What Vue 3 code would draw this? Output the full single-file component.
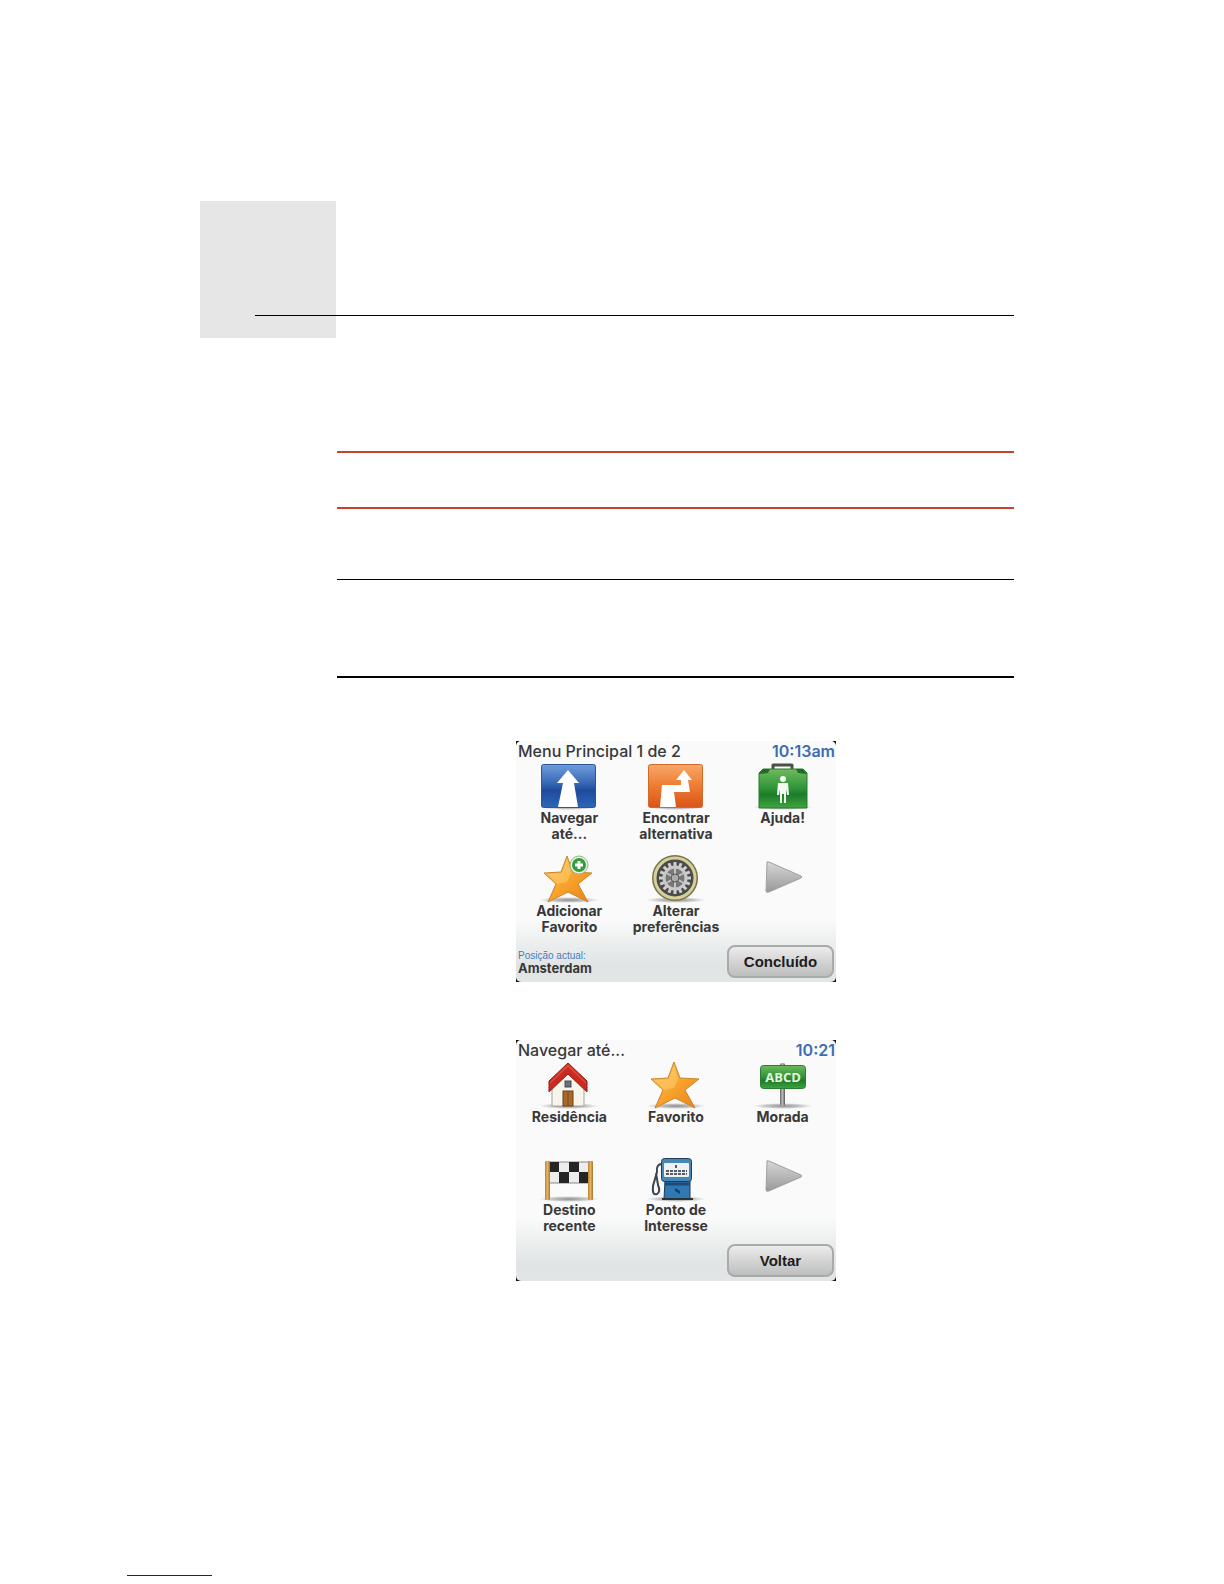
<script setup>
const screens = [
  {
    title: 'Menu Principal 1 de 2',
    time: '10:13am',
    button: 'Concluído',
    position: { label: 'Posição actual:', place: 'Amsterdam' },
    items: [
      { icon: 'navigate', lines: ['Navegar', 'até...'] },
      { icon: 'detour', lines: ['Encontrar', 'alternativa'] },
      { icon: 'help', lines: ['Ajuda!'] },
      { icon: 'addstar', lines: ['Adicionar', 'Favorito'] },
      { icon: 'gear', lines: ['Alterar', 'preferências'] },
      { icon: 'next', lines: [] },
    ],
  },
  {
    title: 'Navegar até...',
    time: '10:21',
    button: 'Voltar',
    position: null,
    items: [
      { icon: 'home', lines: ['Residência'] },
      { icon: 'star', lines: ['Favorito'] },
      { icon: 'sign', lines: ['Morada'] },
      { icon: 'flag', lines: ['Destino', 'recente'] },
      { icon: 'pump', lines: ['Ponto de', 'Interesse'] },
      { icon: 'next', lines: [] },
    ],
  },
]
const teeth = Array.from({ length: 16 }, (_, i) => i * 22.5)
const spokes = [0, 60, 120, 180, 240, 300]
</script>

<template>
  <main class="page">
    <svg class="defs" aria-hidden="true">
      <defs>
        <linearGradient id="blue" x1="0" y1="0" x2="0" y2="1">
          <stop offset="0" stop-color="#6f9ddd" /><stop offset=".45" stop-color="#3566b4" /><stop offset=".6" stop-color="#1f4b9b" /><stop offset="1" stop-color="#2d66b8" />
        </linearGradient>
        <linearGradient id="orange" x1="0" y1="0" x2="0" y2="1">
          <stop offset="0" stop-color="#f8a768" /><stop offset=".5" stop-color="#ee7c32" /><stop offset="1" stop-color="#d9541a" />
        </linearGradient>
        <linearGradient id="green" x1="0" y1="0" x2="0" y2="1">
          <stop offset="0" stop-color="#6dbb5c" /><stop offset=".5" stop-color="#2f9338" /><stop offset=".65" stop-color="#1c7c2a" /><stop offset="1" stop-color="#3fa43f" />
        </linearGradient>
        <linearGradient id="gold" x1="0" y1="0" x2="1" y2="1">
          <stop offset="0" stop-color="#ffc95c" /><stop offset=".5" stop-color="#f9a42c" /><stop offset="1" stop-color="#e8821a" />
        </linearGradient>
        <linearGradient id="silver" x1="0" y1="0" x2="0" y2="1">
          <stop offset="0" stop-color="#d8d8d8" /><stop offset="1" stop-color="#989898" />
        </linearGradient>
        <linearGradient id="wood" x1="0" y1="0" x2="1" y2="0">
          <stop offset="0" stop-color="#b98236" /><stop offset=".5" stop-color="#e3b463" /><stop offset="1" stop-color="#a8732c" />
        </linearGradient>
        <linearGradient id="metal" x1="0" y1="0" x2="1" y2="0">
          <stop offset="0" stop-color="#666" /><stop offset=".5" stop-color="#bbb" /><stop offset="1" stop-color="#555" />
        </linearGradient>
        <radialGradient id="shadow">
          <stop offset="0" stop-color="#444" stop-opacity=".6" /><stop offset=".6" stop-color="#666" stop-opacity=".35" /><stop offset="1" stop-color="#888" stop-opacity="0" />
        </radialGradient>
      </defs>
    </svg>

    <header class="masthead">
      <div class="swatch"></div>
      <hr class="headline">
    </header>

    <div class="content">
      <hr class="rule red first">
      <hr class="rule red second">
      <hr class="rule thin">
      <hr class="rule thick">

      <section v-for="s in screens" :key="s.title" class="screen">
        <div class="face">
          <div class="bar">
            <h2>{{ s.title }}</h2>
            <time>{{ s.time }}</time>
          </div>
          <div class="grid">
            <button v-for="item in s.items" :key="item.icon" type="button" class="item" :aria-label="item.lines.length ? null : 'Seguinte'">
              <svg class="icon" viewBox="0 0 64 48" aria-hidden="true">
                <ellipse v-if="item.icon !== 'next'" cx="32" cy="45" rx="30" ry="3" fill="url(#shadow)" />
                <g v-if="item.icon === 'navigate'">
                  <rect x="4.5" y="2.5" width="54" height="43" rx="2" fill="url(#blue)" stroke="#2b5499" />
                  <path d="M31 8 42 21H37L41 45H21L26 21H20Z" fill="#fff" />
                </g>
                <g v-else-if="item.icon === 'detour'">
                  <rect x="4.5" y="2.5" width="54" height="43" rx="2" fill="url(#orange)" stroke="#d2692c" />
                  <path d="M16 45 18 23H37V18H32L40 8 48 18H44L46 30H30L32 45Z" fill="#fff" />
                </g>
                <g v-else-if="item.icon === 'help'">
                  <path d="M22 9V3H41V9" fill="none" stroke="#4a504a" stroke-width="3" stroke-linejoin="round" />
                  <path d="M12 7H52L56 11V46H8V11Z" fill="url(#green)" stroke="#2a7a30" stroke-linejoin="round" />
                  <path d="M8 12 12 7H19L17 11ZM56 12 52 7H45L47 11Z" fill="#236b2b" />
                  <circle cx="32" cy="17" r="3" fill="#f3fbf0" />
                  <path d="M27 21H37L38 33H36L35 27V41H33V32H31V41H29V27L28 33H26Z" fill="#f3fbf0" />
                </g>
                <g v-else-if="item.icon === 'addstar' || item.icon === 'star'">
                  <path d="M30 1 36 17 55 18 41 29 51 47 31 37 11 47 19 29 7 18 24 17Z" fill="url(#gold)" stroke="#c9852f" stroke-linejoin="round" />
                  <path d="M30 4 34 18 30 27 20 29 11 19 25 18Z" fill="#ffdc88" opacity=".4" />
                  <template v-if="item.icon === 'addstar'">
                    <circle cx="42" cy="10" r="9" fill="#e6f1e2" stroke="#93b78c" />
                    <circle cx="42" cy="10" r="7" fill="#379b3b" />
                    <path d="M42 6V14M38 10H46" stroke="#fff" stroke-width="3" />
                  </template>
                </g>
                <g v-else-if="item.icon === 'gear'">
                  <circle cx="31" cy="23" r="22" fill="#4c4a3c" stroke="#77724d" stroke-width="2" />
                  <circle cx="31" cy="23" r="20" fill="#4b4b4b" stroke="#d5cf98" stroke-width="3" />
                  <rect v-for="a in teeth" :key="a" x="29.5" y="7" width="3" height="6" fill="#d0d0d0" :transform="`rotate(${a} 31 23)`" />
                  <circle cx="31" cy="23" r="11" fill="#777" stroke="#c9c9c9" stroke-width="3" />
                  <path v-for="a in spokes" :key="'s' + a" d="M31 23V13" stroke="#c4c4c4" stroke-width="2" :transform="`rotate(${a} 31 23)`" />
                  <circle cx="31" cy="23" r="4" fill="#aaa" stroke="#555" />
                </g>
                <path v-else-if="item.icon === 'next'" d="M16 8Q15 6 18 7L50 21Q52 22 50 23L18 37Q15 38 15 36Z" fill="url(#silver)" stroke="#a0a0a0" />
                <g v-else-if="item.icon === 'home'">
                  <path d="M15 26 31 9 47 26V45H15Z" fill="#f7f4ec" stroke="#a9a298" />
                  <path d="M31 2 12 20V31L31 13 50 31V20Z" fill="#c92a22" stroke="#8c1d18" stroke-linejoin="round" />
                  <path d="M31 3 13 21V23L31 6 49 23V21Z" fill="#e04638" />
                  <rect x="28" y="20" width="6" height="6" fill="#687078" stroke="#474d52" />
                  <rect x="26" y="30" width="10" height="15" fill="#aa6929" stroke="#694018" />
                  <path d="M31 30V45" stroke="#7d4b1c" />
                </g>
                <g v-else-if="item.icon === 'sign'">
                  <rect x="29" y="2" width="5" height="43" rx="2" fill="url(#metal)" />
                  <rect x="9.5" y="4.5" width="45" height="23" rx="3" fill="url(#green)" stroke="#2c7d32" />
                  <text x="32" y="21" text-anchor="middle" class="plate">ABCD</text>
                </g>
                <g v-else-if="item.icon === 'flag'">
                  <rect x="12" y="8" width="40" height="21" fill="#ededed" stroke="#888" />
                  <path d="M12 8H22V18H12ZM32 8H42V18H32ZM22 18H32V29H22ZM42 18H52V29H42Z" fill="#252525" />
                  <rect x="8" y="7" width="5" height="39" rx="1" fill="url(#wood)" />
                  <rect x="51" y="7" width="5" height="39" rx="1" fill="url(#wood)" />
                </g>
                <g v-else-if="item.icon === 'pump'">
                  <path d="M18 10Q12 10 13 18L9 32Q8 42 13 40 17 38 14 31L12 19" fill="none" stroke="#3c4650" stroke-width="2" />
                  <path d="M21 26H46V45H20Z" fill="#2f78b4" stroke="#1c3c58" />
                  <rect x="17.5" y="4.5" width="30" height="23" rx="3" fill="#4787b5" stroke="#1f3f5a" />
                  <rect x="20" y="9" width="25" height="14" rx="1" fill="#eef1f2" />
                  <path d="M22 17H43M22 20H43" stroke="#555b60" stroke-width="2" stroke-dasharray="3 1" />
                  <path d="M32 11V14" stroke="#555b60" stroke-width="2" />
                  <path d="M21 30H46" stroke="#1c4b74" stroke-width="3" />
                  <path d="M31 34 36 37V40L31 37Z" fill="#16436d" />
                  <path d="M18 45H49" stroke="#2b3338" stroke-width="2" />
                </g>
              </svg>
              <span v-for="line in item.lines" :key="line" class="label">{{ line }}</span>
            </button>
          </div>
          <div class="foot">
            <p v-if="s.position" class="position">
              <span>{{ s.position.label }}</span>
              <strong>{{ s.position.place }}</strong>
            </p>
            <button type="button" class="action">{{ s.button }}</button>
          </div>
        </div>
      </section>
    </div>

    <hr class="footline">
  </main>
</template>

<style>
body {
  margin: 0;
  background: #fff;
}
</style>

<style scoped>
.page {
  box-sizing: border-box;
  padding: 201px 210px 8px 200px;
  font-family: Inter, "Liberation Sans", sans-serif;
  color: #383838;
}
.defs {
  position: absolute;
  width: 0;
  height: 0;
}
hr {
  margin: 0;
  border: 0;
}
.masthead {
  position: relative;
}
.swatch {
  width: 136px;
  height: 137px;
  background: #e6e6e6;
}
.headline {
  position: absolute;
  top: 114px;
  left: 55px;
  right: 0;
  height: 1px;
  background: #000;
}
.content {
  display: flex;
  flex-direction: column;
  margin-left: 137px;
}
.rule {
  height: 2px;
  background: #000;
}
.red {
  background: #c5432f;
}
.first {
  margin-top: 113px;
}
.second {
  margin-top: 54px;
}
.thin {
  height: 1px;
  margin-top: 70px;
}
.thick {
  margin-top: 96px;
}
.screen {
  align-self: center;
  width: 320px;
  margin: 63px 0 0 1px;
  background: #111;
}
.screen + .screen {
  margin-top: 58px;
}
.face {
  border-radius: 5px;
  background: linear-gradient(#fafafa 0, #fafafa 74%, #e0e4e4 93%, #e3e6e6 100%);
}
.bar {
  display: flex;
  justify-content: space-between;
  height: 21px;
  padding: 0 1px 0 2px;
  line-height: 20px;
}
h2,
time {
  margin: 0;
  font-size: 16px;
  font-weight: 500;
}
time {
  font-weight: 600;
  color: #3c6cb4;
}
.grid {
  display: grid;
  grid-template-columns: repeat(3, 1fr);
  row-gap: 13px;
}
.item {
  display: flex;
  flex-direction: column;
  align-items: center;
  height: 80px;
  padding: 0;
  border: 0;
  background: none;
  color: inherit;
  font: inherit;
}
.icon {
  width: 64px;
  height: 48px;
}
.label {
  font-size: 14px;
  font-weight: 700;
  line-height: 16px;
  white-space: nowrap;
}
.plate {
  font: 700 13px "Open Sans", sans-serif;
  fill: #e4f5dc;
}
.foot {
  display: flex;
  align-items: center;
  height: 47px;
  padding: 0 2px;
}
.position {
  display: flex;
  flex-direction: column;
  margin: 6px 0 0;
}
.position span {
  font: 10px/13px "Liberation Sans", sans-serif;
  color: #4a7cc0;
}
.position strong {
  font-size: 13px;
  line-height: 13px;
}
.action {
  width: 107px;
  height: 33px;
  margin: 6px 0 0 auto;
  padding: 0;
  border: 2px solid #a9abab;
  border-radius: 8px;
  background: linear-gradient(#ececec, #d4d4d4 50%, #bdbfbf);
  color: #1c1c1c;
  font: 700 15px "Liberation Sans", sans-serif;
}
.footline {
  width: 85px;
  height: 1px;
  margin: 294px 0 0 -73px;
  background: #1a1a80;
}
</style>
